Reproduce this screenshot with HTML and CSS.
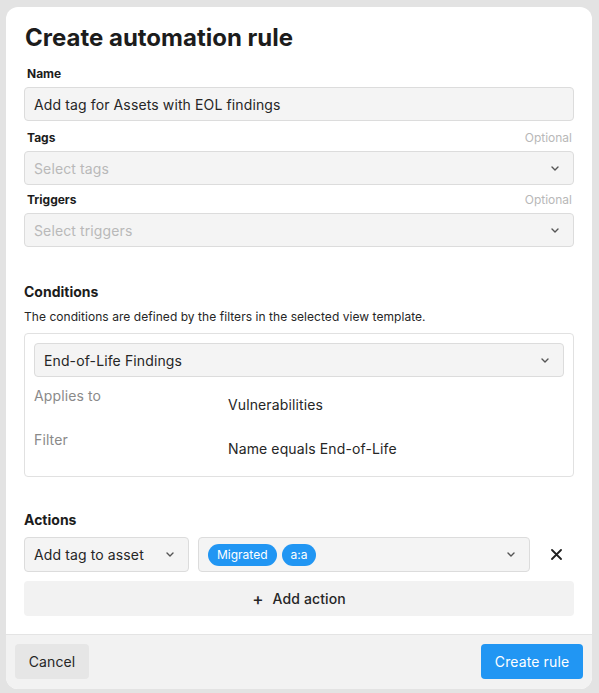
FILE: index.html
```html
<!DOCTYPE html>
<html>
<head>
<meta charset="utf-8">
<link rel="stylesheet" href="styles.css">
</head>
<body>
<div class="modal">
  <div class="content">
    <h1 class="title">Create automation rule</h1>

    <div class="field first">
      <div class="label-row"><span class="label">Name</span></div>
      <div class="input"><span class="value">Add tag for Assets with EOL findings</span></div>
    </div>

    <div class="field">
      <div class="label-row"><span class="label">Tags</span><span class="optional">Optional</span></div>
      <div class="input select"><span class="placeholder">Select tags</span>
        <svg class="chev" width="8" height="5" viewBox="0 0 8 5"><path d="M1 1l3 3 3-3" fill="none" stroke="#555" stroke-width="1.4" stroke-linecap="round" stroke-linejoin="round"/></svg>
      </div>
    </div>

    <div class="field tight">
      <div class="label-row"><span class="label">Triggers</span><span class="optional">Optional</span></div>
      <div class="input select"><span class="placeholder">Select triggers</span>
        <svg class="chev" width="8" height="5" viewBox="0 0 8 5"><path d="M1 1l3 3 3-3" fill="none" stroke="#555" stroke-width="1.4" stroke-linecap="round" stroke-linejoin="round"/></svg>
      </div>
    </div>

    <h2 class="section-title conditions">Conditions</h2>
    <p class="desc">The conditions are defined by the filters in the selected view template.</p>

    <div class="cond-box">
      <div class="input select"><span class="value">End-of-Life Findings</span>
        <svg class="chev" width="8" height="5" viewBox="0 0 8 5"><path d="M1 1l3 3 3-3" fill="none" stroke="#555" stroke-width="1.4" stroke-linecap="round" stroke-linejoin="round"/></svg>
      </div>
      <div class="cond-grid">
        <div class="cond-label">Applies to</div>
        <div class="cond-value">Vulnerabilities</div>
        <div class="cond-label">Filter</div>
        <div class="cond-value">Name equals End-of-Life</div>
      </div>
    </div>

    <h2 class="section-title actions">Actions</h2>
    <div class="action-row">
      <div class="input select action-type"><span class="value">Add tag to asset</span>
        <svg class="chev" width="8" height="5" viewBox="0 0 8 5"><path d="M1 1l3 3 3-3" fill="none" stroke="#555" stroke-width="1.4" stroke-linecap="round" stroke-linejoin="round"/></svg>
      </div>
      <div class="input select action-tags">
        <div class="chips"><span class="chip">Migrated</span><span class="chip">a:a</span></div>
        <svg class="chev" width="8" height="5" viewBox="0 0 8 5"><path d="M1 1l3 3 3-3" fill="none" stroke="#555" stroke-width="1.4" stroke-linecap="round" stroke-linejoin="round"/></svg>
      </div>
      <div class="remove">
        <svg width="11" height="11" viewBox="0 0 11 11"><path d="M1 1l9 9M10 1l-9 9" stroke="#1f1f1f" stroke-width="1.8" stroke-linecap="round"/></svg>
      </div>
    </div>
    <button class="add-action"><span class="plus">+</span>Add action</button>
  </div>
  <div class="footer">
    <button class="btn cancel">Cancel</button>
    <button class="btn primary">Create rule</button>
  </div>
</div>
</body>
</html>
```

FILE: styles.css
```css
* { box-sizing: border-box; }
html, body { margin: 0; }
body {
  background: #e3e3e3;
  padding: 7px 7px 4px 6px;
  font-family: Inter, "Noto Sans", sans-serif;
  color: #1f1f1f;
}
.modal {
  width: 586px;
  background: #fff;
  border-radius: 12px;
  overflow: hidden;
}
.content {
  padding: 15px 18px 18px 18px;
}
.title {
  margin: 0 0 0 1px;
  font-size: 24px;
  line-height: 32px;
  font-weight: 700;
  color: #1c1c1c;
}
.field { margin-top: 9px; }
.field.first { margin-top: 12px; }
.field.tight { margin-top: 7px; }
.label-row {
  display: flex;
  justify-content: space-between;
  padding: 0 2px 0 3px;
  height: 16px;
  margin-bottom: 5px;
}
.label {
  font-size: 12px;
  line-height: 16px;
  font-weight: 700;
  color: #1c1c1c;
}
.optional {
  font-size: 12px;
  line-height: 16px;
  color: #b8b8b8;
}
.input {
  height: 34px;
  background: #f4f4f4;
  border: 1px solid #dcdcdc;
  border-radius: 4px;
  display: flex;
  align-items: center;
  padding: 0 14px 0 9px;
  font-size: 14px;
  letter-spacing: 0.12px;
}
.value { color: #262626; }
.placeholder { color: #b9b9b9; }
.select { justify-content: space-between; }
.chev { flex: none; }
.section-title {
  margin: 0;
  font-size: 14px;
  line-height: 20px;
  font-weight: 700;
  color: #1c1c1c;
}
.conditions { margin-top: 35px; }
.desc {
  margin: 7px 0 0 0;
  font-size: 12px;
  line-height: 16px;
  color: #262626;
  letter-spacing: 0.05px;
}
.cond-box {
  margin-top: 8px;
  border: 1px solid #e1e1e1;
  border-radius: 4px;
  padding: 9px 9px 17px 9px;
}
.cond-grid {
  display: grid;
  grid-template-columns: 194px 1fr;
  row-gap: 15px;
  margin-top: 9px;
  font-size: 14px;
  line-height: 20px;
  letter-spacing: 0.12px;
}
.cond-label { color: #8a8a8a; }
.cond-value { color: #262626; margin-top: 9px; }
.actions { margin-top: 33px; }
.action-row {
  display: flex;
  margin-top: 7px;
  gap: 9px;
  height: 35px;
}
.action-row .input { height: 35px; }
.action-type { width: 165px; flex: none; }
.action-tags { flex: 1; padding-left: 9px; }
.chips { display: flex; gap: 5px; }
.chip {
  background: #2196f3;
  color: #fff;
  font-size: 12px;
  line-height: 22px;
  height: 22px;
  padding: 0 9px;
  border-radius: 11px;
  letter-spacing: 0;
}
.remove {
  width: 35px;
  flex: none;
  display: flex;
  align-items: center;
  justify-content: center;
}
.add-action {
  display: flex;
  width: 100%;
  height: 35px;
  margin-top: 9px;
  align-items: center;
  justify-content: center;
  border: none;
  border-radius: 4px;
  background: #f2f2f2;
  font-family: inherit;
  font-size: 14px;
  font-weight: 500;
  color: #262626;
  letter-spacing: 0.12px;
}
.plus { font-size: 17px; margin-right: 9px; font-weight: 500; }
.footer {
  background: #f2f2f2;
  border-top: 1px solid #e4e4e4;
  padding: 9px 9px 10px 9px;
  display: flex;
  justify-content: space-between;
}
.btn {
  height: 35px;
  border: none;
  border-radius: 4px;
  font-family: inherit;
  font-size: 14px;
  padding: 0 13px;
  letter-spacing: 0.12px;
}
.cancel { background: #e6e6e6; color: #262626; width: 74px; }
.primary { background: #2196f3; color: #fff; width: 102px; }
```
